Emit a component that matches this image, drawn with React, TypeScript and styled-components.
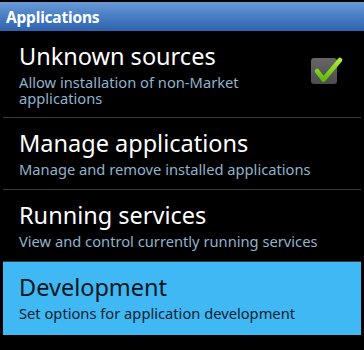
import React, { FC } from "react";
import styled, { createGlobalStyle } from "styled-components";

const GlobalStyle = createGlobalStyle`
  html, body {
    margin: 0;
    padding: 0;
    background: #000;
  }
  body {
    font-family: "Noto Sans", "Open Sans", "DejaVu Sans", sans-serif;
  }
`;

const Screen = styled.div`
  width: 364px;
  height: 350px;
  background: #000;
  overflow: hidden;
  display: flex;
  flex-direction: column;
`;

const TitleBar = styled.div`
  height: 29px;
  margin-top: 2px;
  padding-left: 6px;
  display: flex;
  align-items: center;
  background: linear-gradient(180deg, #6a9bd6 0%, #4a80c6 45%, #2f62ad 100%);
  color: #fff;
  font-size: 15.5px;
  font-weight: 700;
  letter-spacing: -0.2px;
`;

const List = styled.div`
  display: flex;
  flex-direction: column;
  padding: 0 3px;
`;

const Row = styled.div<{ $selected?: boolean; $tall?: boolean }>`
  box-sizing: border-box;
  height: ${(p) => (p.$tall ? 87 : p.$selected ? 73 : 72)}px;
  padding: 11px 16px 0;
  display: flex;
  align-items: flex-start;
  border-bottom: ${(p) => (p.$selected ? "none" : "1px solid #3a3a3a")};
  background: ${(p) => (p.$selected ? "#3fb8f4" : "transparent")};
`;

const RowText = styled.div`
  flex: 1;
  display: flex;
  flex-direction: column;
`;

const Title = styled.div<{ $selected?: boolean }>`
  font-size: 23.5px;
  line-height: 28px;
  color: ${(p) => (p.$selected ? "#0b1620" : "#fff")};
`;

const Summary = styled.div<{ $selected?: boolean }>`
  margin-top: 4px;
  font-size: 14.7px;
  line-height: 16px;
  color: ${(p) => (p.$selected ? "#10222e" : "#8fb3cc")};
`;

const CheckBox = styled.div`
  width: 26px;
  height: 26px;
  margin-right: 8px;
  margin-top: 16px;
  border-radius: 3px;
  background: linear-gradient(180deg, #666 0%, #4c4c4c 100%);
  position: relative;
`;

const CheckMark = styled.svg`
  position: absolute;
  left: 0;
  top: -3px;
  overflow: visible;
`;

interface Pref {
  title: string;
  summary: string;
  checked?: boolean;
  selected?: boolean;
  tall?: boolean;
}

const prefs: Pref[] = [
  {
    title: "Unknown sources",
    summary: "Allow installation of non-Market applications",
    checked: true,
    tall: true,
  },
  { title: "Manage applications", summary: "Manage and remove installed applications" },
  { title: "Running services", summary: "View and control currently running services" },
  { title: "Development", summary: "Set options for application development", selected: true },
];

const App: FC = () => {
  return (
    <>
      <GlobalStyle />
      <Screen>
        <TitleBar>Applications</TitleBar>
        <List>
          {prefs.map((p) => (
            <Row key={p.title} $selected={p.selected} $tall={p.tall}>
              <RowText>
                <Title $selected={p.selected}>{p.title}</Title>
                <Summary $selected={p.selected}>{p.summary}</Summary>
              </RowText>
              {p.checked && (
                <CheckBox>
                  <CheckMark width="34" height="30" viewBox="0 0 34 30">
                    <defs>
                      <linearGradient id="chk" x1="0" y1="0" x2="0" y2="1">
                        <stop offset="0" stopColor="#a8ec34" />
                        <stop offset="1" stopColor="#62b80e" />
                      </linearGradient>
                    </defs>
                    <polyline
                      points="6,16 12.5,24.5 29,5"
                      fill="none"
                      stroke="url(#chk)"
                      strokeWidth="4.6"
                      strokeLinecap="round"
                      strokeLinejoin="round"
                    />
                  </CheckMark>
                </CheckBox>
              )}
            </Row>
          ))}
        </List>
      </Screen>
    </>
  );
};

export default App;
